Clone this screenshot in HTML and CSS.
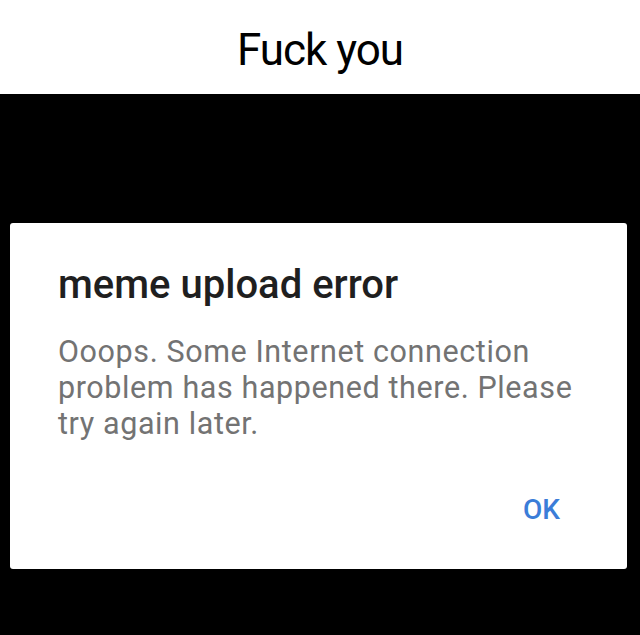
FILE: index.html
```html
<!DOCTYPE html>
<html>
<head>
<meta charset="utf-8">
<link rel="stylesheet" href="styles.css">
</head>
<body>
<header class="caption">Fuck you</header>
<main class="screen">
  <section class="dialog">
    <h1 class="title">meme upload error</h1>
    <p class="message">Ooops. Some Internet connection problem has happened there. Please try again later.</p>
    <div class="actions"><span class="ok">OK</span></div>
  </section>
</main>
</body>
</html>
```
FILE: styles.css
```css
html, body {
  margin: 0;
  padding: 0;
  width: 640px;
  height: 635px;
  overflow: hidden;
  font-family: Roboto, "Noto Sans", sans-serif;
}
.caption {
  height: 94px;
  background: #fff;
  color: #000;
  font-size: 44px;
  line-height: 87px;
  padding-top: 7px;
  text-align: center;
  letter-spacing: -1px;
  box-sizing: border-box;
}
.screen {
  height: 541px;
  background: #000;
  padding: 129px 13px 0 10px;
  box-sizing: border-box;
}
.dialog {
  background: #fff;
  border-radius: 3px;
  height: 346px;
  box-sizing: border-box;
  padding: 39px 39px 0 48px;
}
.title {
  margin: 0;
  font-size: 40px;
  line-height: 46px;
  font-weight: 500;
  color: #1f1f1f;
}
.message {
  margin: 26px 0 0;
  font-size: 30.5px;
  line-height: 36px;
  letter-spacing: 0.6px;
  color: #737373;
}
.actions {
  display: flex;
  justify-content: flex-end;
  margin-top: 52px;
  padding-right: 28px;
}
.ok {
  font-size: 28px;
  line-height: 32px;
  font-weight: 500;
  color: #3b7dd8;
}
```
